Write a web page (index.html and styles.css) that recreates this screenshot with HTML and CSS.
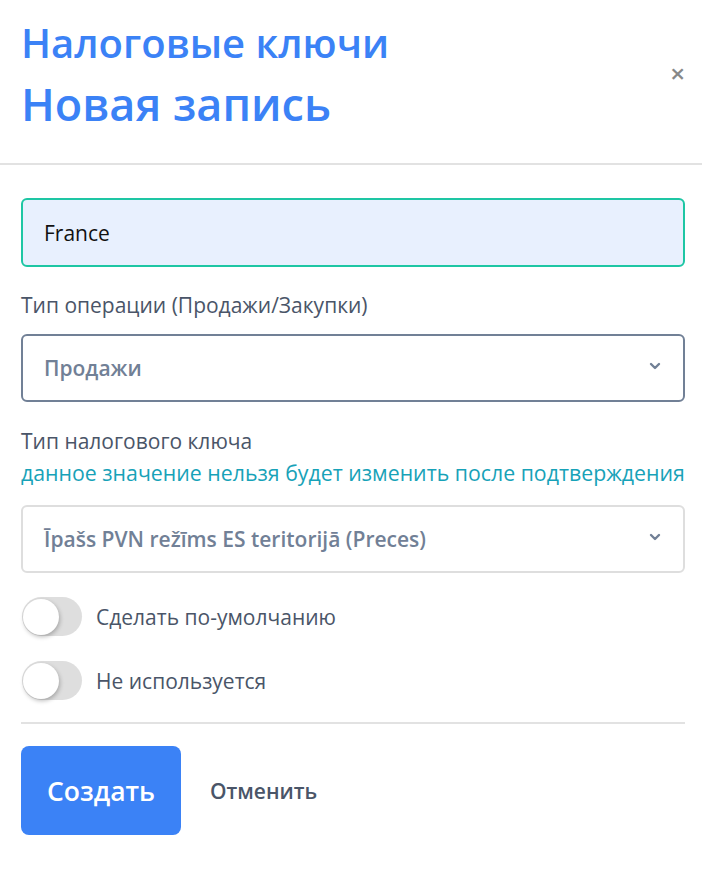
FILE: index.html
```html
<!DOCTYPE html>
<html lang="ru">
<head>
<meta charset="utf-8">
<link rel="stylesheet" href="styles.css">
</head>
<body>
<div class="modal">
  <header class="modal-header">
    <div class="titles">
      <div class="title title-sub">Налоговые ключи</div>
      <div class="title title-main">Новая запись</div>
    </div>
    <button class="close" aria-label="close">&times;</button>
  </header>
  <div class="modal-body">
    <div class="input input-focus">France</div>
    <div class="label">Тип операции (Продажи/Закупки)</div>
    <div class="select select-dark">
      <span>Продажи</span>
      <svg class="chev" width="12" height="8" viewBox="0 0 12 8"><path d="M2 2 L6 6 L10 2" fill="none" stroke="currentColor" stroke-width="2.4" stroke-linecap="round" stroke-linejoin="round"/></svg>
    </div>
    <div class="label label-second">Тип налогового ключа</div>
    <div class="hint">данное значение нельзя будет изменить после подтверждения</div>
    <div class="select select-light">
      <span>Īpašs PVN režīms ES teritorijā (Preces)</span>
      <svg class="chev" width="12" height="8" viewBox="0 0 12 8"><path d="M2 2 L6 6 L10 2" fill="none" stroke="currentColor" stroke-width="2.4" stroke-linecap="round" stroke-linejoin="round"/></svg>
    </div>
    <div class="toggle-row">
      <span class="toggle"><span class="knob"></span></span>
      <span class="toggle-label">Сделать по-умолчанию</span>
    </div>
    <div class="toggle-row">
      <span class="toggle"><span class="knob"></span></span>
      <span class="toggle-label">Не используется</span>
    </div>
    <div class="footer">
      <button class="btn-primary">Создать</button>
      <button class="btn-link">Отменить</button>
    </div>
  </div>
</div>
</body>
</html>
```

FILE: styles.css
```css
* { box-sizing: border-box; }
html, body { margin: 0; padding: 0; background: #fff; }
body { font-family: "Open Sans", "Noto Sans", sans-serif; width: 702px; }
.modal { width: 702px; }
.modal-header {
  display: flex;
  align-items: flex-start;
  justify-content: space-between;
  padding: 12px 17px 0 21px;
  border-bottom: 2px solid #e2e2e2;
  height: 165px;
}
.titles { display: flex; flex-direction: column; }
.title {
  color: #3b82f6;
  font-weight: 600;
  line-height: 61px;
  white-space: nowrap;
}
.title-sub { font-size: 40px; }
.title-main { font-size: 45px; }
.close {
  border: 0; background: none; padding: 0;
  font-family: "Open Sans", sans-serif;
  color: #888;
  font-size: 26px;
  font-weight: 600;
  line-height: 26px;
  margin-top: 48px;
}
.modal-body { padding: 33px 17px 0 21px; }
.input {
  height: 69px;
  border: 2px solid #1ec6a4;
  border-radius: 6px;
  background: #e8f0fe;
  display: flex;
  align-items: center;
  padding-left: 21px;
  font-size: 21px;
  color: #111;
}
.label {
  color: #4a5568;
  font-size: 21px;
  line-height: 28px;
  margin-top: 24px;
  white-space: nowrap;
}
.label-second { margin-top: 25px; }
.hint {
  color: #17a2b8;
  font-size: 21.3px;
  line-height: 28px;
  margin-top: 4px;
  white-space: nowrap;
}
.select {
  height: 68px;
  border: 2px solid #718096;
  border-radius: 6px;
  margin-top: 15px;
  display: flex;
  align-items: center;
  justify-content: space-between;
  padding: 0 22px 0 21px;
  font-size: 21px;
  font-weight: 600;
  color: #718096;
}
.select-light { border-color: #dedede; margin-top: 18px; }
.chev { color: #718096; margin-top: -4px; }
.toggle-row {
  display: flex;
  align-items: center;
  gap: 14px;
  margin-top: 25px;
  height: 39px;
}
.select-light + .toggle-row { margin-top: 24px; }
.toggle {
  width: 60px; height: 39px;
  border-radius: 20px;
  background: #dedede;
  position: relative;
  flex: none;
  margin-left: 1px;
}
.knob {
  position: absolute;
  left: 1px; top: 1.5px;
  width: 36px; height: 36px;
  border-radius: 50%;
  background: #fff;
  box-shadow: 1px 2px 4px rgba(0,0,0,0.25);
}
.toggle-label { font-size: 21px; color: #4a5568; white-space: nowrap; }
.footer {
  border-top: 2px solid #e2e2e2;
  margin-top: 22px;
  padding-top: 22px;
  display: flex;
  align-items: center;
  gap: 29px;
}
.btn-primary {
  width: 160px; height: 89px;
  background: #3b82f6;
  color: #fff;
  border: 0;
  border-radius: 8px;
  font-family: "Open Sans", sans-serif;
  font-size: 26.5px;
  font-weight: 600;
  padding: 0;
}
.btn-link {
  border: 0; background: none; padding: 0;
  font-family: "Open Sans", sans-serif;
  font-size: 21px;
  font-weight: 600;
  color: #4a5568;
}
```
